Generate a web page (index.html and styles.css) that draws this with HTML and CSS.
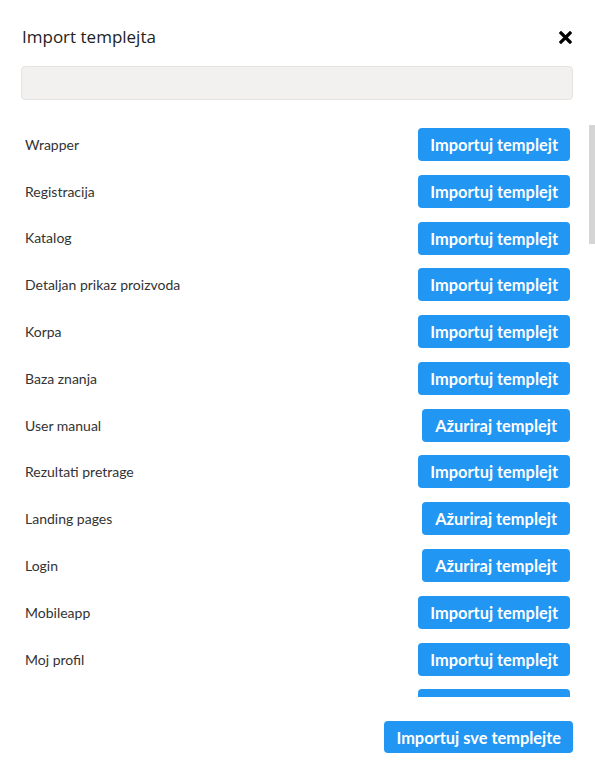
FILE: index.html
```html
<!DOCTYPE html>
<html lang="sr">
  <head>
    <meta charset="UTF-8" />
    <meta name="viewport" content="width=device-width, initial-scale=1.0" />
    <title>Import templejta</title>
    <link rel="stylesheet" href="styles.css">
  </head>
  <body>
    <div class="modal">
      <header class="modal-header">
        <h1 class="modal-title">Import templejta</h1>
        <button class="close-btn" aria-label="Zatvori">
          <svg width="13" height="13" viewBox="0 0 13 13">
            <path d="M2 2 L11 11 M11 2 L2 11" stroke="#000" stroke-width="3.2" stroke-linecap="square" />
          </svg>
        </button>
      </header>

      <input class="search" type="text" />

      <div class="template-area">
        <ul class="template-list">
          <li class="template-row"><span>Wrapper</span><button class="btn btn-import">Importuj templejt</button></li>
          <li class="template-row"><span>Registracija</span><button class="btn btn-import">Importuj templejt</button></li>
          <li class="template-row"><span>Katalog</span><button class="btn btn-import">Importuj templejt</button></li>
          <li class="template-row"><span>Detaljan prikaz proizvoda</span><button class="btn btn-import">Importuj templejt</button></li>
          <li class="template-row"><span>Korpa</span><button class="btn btn-import">Importuj templejt</button></li>
          <li class="template-row"><span>Baza znanja</span><button class="btn btn-import">Importuj templejt</button></li>
          <li class="template-row"><span>User manual</span><button class="btn btn-update">Ažuriraj templejt</button></li>
          <li class="template-row"><span>Rezultati pretrage</span><button class="btn btn-import">Importuj templejt</button></li>
          <li class="template-row"><span>Landing pages</span><button class="btn btn-update">Ažuriraj templejt</button></li>
          <li class="template-row"><span>Login</span><button class="btn btn-update">Ažuriraj templejt</button></li>
          <li class="template-row"><span>Mobileapp</span><button class="btn btn-import">Importuj templejt</button></li>
          <li class="template-row"><span>Moj profil</span><button class="btn btn-import">Importuj templejt</button></li>
          <li class="template-row"><span>Checkout</span><button class="btn btn-import">Importuj templejt</button></li>
        </ul>
        <div class="scroll-track">
          <div class="scroll-thumb"></div>
        </div>
      </div>

      <footer class="modal-footer">
        <button class="btn btn-all">Importuj sve templejte</button>
      </footer>
    </div>
  </body>
</html>
```

FILE: styles.css
```css
* {
  margin: 0;
  padding: 0;
  box-sizing: border-box;
}

body {
  background-color: #ffffff;
  color: #333333;
  font-family: "Lato", sans-serif;
}

.modal {
  width: 595px;
  height: 776px;
  display: flex;
  flex-direction: column;
}

.modal-header {
  display: flex;
  align-items: center;
  justify-content: space-between;
  padding: 22px 22px 0 22px;
  height: 50px;
}

.modal-title {
  font-family: "Open Sans", sans-serif;
  font-size: 17px;
  font-weight: 400;
  color: #222222;
}

.close-btn {
  background: none;
  border: none;
  width: 13px;
  height: 13px;
  display: flex;
  margin-top: 3px;
  margin-right: 1px;
}

.search {
  display: block;
  margin: 16px 22px 0 21px;
  height: 34px;
  background-color: #f2f1f0;
  border: 1px solid #e4e3e2;
  border-radius: 4px;
}

.template-area {
  display: flex;
  margin-top: 21px;
  height: 576px;
  overflow: hidden;
}

.template-list {
  list-style: none;
  flex: 1;
  padding: 7px 19px 0 25px;
  display: flex;
  flex-direction: column;
  gap: 14px;
}

.template-row {
  display: flex;
  align-items: center;
  justify-content: space-between;
  height: 32.8px;
  flex-shrink: 0;
  font-size: 14px;
  color: #333333;
}

.btn {
  background-color: #2196f3;
  color: #ffffff;
  border: none;
  border-radius: 4px;
  font-family: "Lato", sans-serif;
  font-weight: 700;
  font-size: 16.4px;
  height: 33px;
  padding: 0 12px;
}

.btn-update {
  padding: 0 13px;
}

.scroll-track {
  width: 6px;
  padding-top: 4px;
}

.scroll-thumb {
  height: 119px;
  background-color: #d6d5d5;
}

.modal-footer {
  display: flex;
  justify-content: flex-end;
  padding: 24px 22px 0 0;
}

.btn-all {
  height: 32px;
  padding: 0 12px;
}
```
